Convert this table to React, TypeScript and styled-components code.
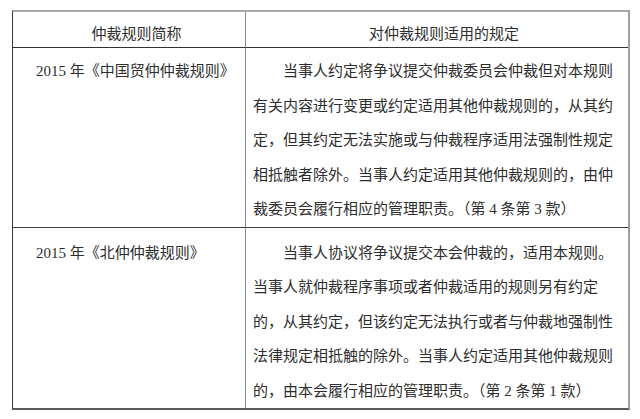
import React from "react";
import styled, { createGlobalStyle } from "styled-components";

const GlobalStyle = createGlobalStyle`
  html, body {
    margin: 0;
    padding: 0;
    background: #ffffff;
  }
  body {
    font-family: "Liberation Serif", "Noto Sans CJK SC", serif;
    color: #2e2e2e;
  }
`;

const Page = styled.div`
  padding: 10px 0 0 12px;
  width: 640px;
  height: 419px;
  box-sizing: border-box;
  background: #fff;
`;

const Frame = styled.div`
  box-sizing: border-box;
  width: 618px;
  display: grid;
  grid-template-columns: 233px 1fr;
  border-left: 1px solid #3a3a3a;
  border-top: 2px solid #a8a8a8;
  border-right: 2px solid #9e9e9e;
  border-bottom: 2px solid #5c5c5c;
`;

const HeadCell = styled.div<{ $last?: boolean }>`
  box-sizing: border-box;
  height: 36px;
  padding: 9px 0 0 ${(p) => (p.$last ? 14 : 15)}px;
  text-align: center;
  font-size: 15px;
  line-height: 26px;
  border-bottom: 1px solid #333;
  border-right: ${(p) => (p.$last ? "none" : "1px solid #8a8a8a")};
  white-space: nowrap;
`;

const NameCell = styled.div<{ $top: number; $last?: boolean }>`
  box-sizing: border-box;
  padding: ${(p) => p.$top}px 0 0 23px;
  font-size: 15px;
  line-height: 34.5px;
  border-right: 1px solid #8a8a8a;
  border-bottom: ${(p) => (p.$last ? "none" : "1px solid #3a3a3a")};
  white-space: nowrap;
`;

const RuleCell = styled.div<{ $top: number; $last?: boolean }>`
  box-sizing: border-box;
  padding: ${(p) => p.$top}px 0 0 7px;
  font-size: 15px;
  line-height: 34.5px;
  text-indent: 30px;
  border-bottom: ${(p) => (p.$last ? "none" : "1px solid #3a3a3a")};
  white-space: nowrap;
`;

const Line = styled.span`
  display: block;
  text-indent: 0;
  &:first-child {
    text-indent: 30px;
  }
`;

type Row = { name: string; lines: string[]; top: number };

const rows: Row[] = [
  {
    name: "2015 年《中国贸仲仲裁规则》",
    top: 6,
    lines: [
      "当事人约定将争议提交仲裁委员会仲裁但对本规则",
      "有关内容进行变更或约定适用其他仲裁规则的，从其约",
      "定，但其约定无法实施或与仲裁程序适用法强制性规定",
      "相抵触者除外。当事人约定适用其他仲裁规则的，由仲",
      "裁委员会履行相应的管理职责。（第 4 条第 3 款）",
    ],
  },
  {
    name: "2015 年《北仲仲裁规则》",
    top: 8,
    lines: [
      "当事人协议将争议提交本会仲裁的，适用本规则。",
      "当事人就仲裁程序事项或者仲裁适用的规则另有约定",
      "的，从其约定，但该约定无法执行或者与仲裁地强制性",
      "法律规定相抵触的除外。当事人约定适用其他仲裁规则",
      "的，由本会履行相应的管理职责。（第 2 条第 1 款）",
    ],
  },
];

export default function App() {
  return (
    <>
      <GlobalStyle />
      <Page>
        <Frame>
          <HeadCell>仲裁规则简称</HeadCell>
          <HeadCell $last>对仲裁规则适用的规定</HeadCell>
          {rows.map((r, i) => (
            <React.Fragment key={r.name}>
              <NameCell $top={r.top} $last={i === rows.length - 1}>
                {r.name}
              </NameCell>
              <RuleCell $top={r.top} $last={i === rows.length - 1}>
                {r.lines.map((l) => (
                  <Line key={l}>{l}</Line>
                ))}
              </RuleCell>
            </React.Fragment>
          ))}
        </Frame>
      </Page>
    </>
  );
}
